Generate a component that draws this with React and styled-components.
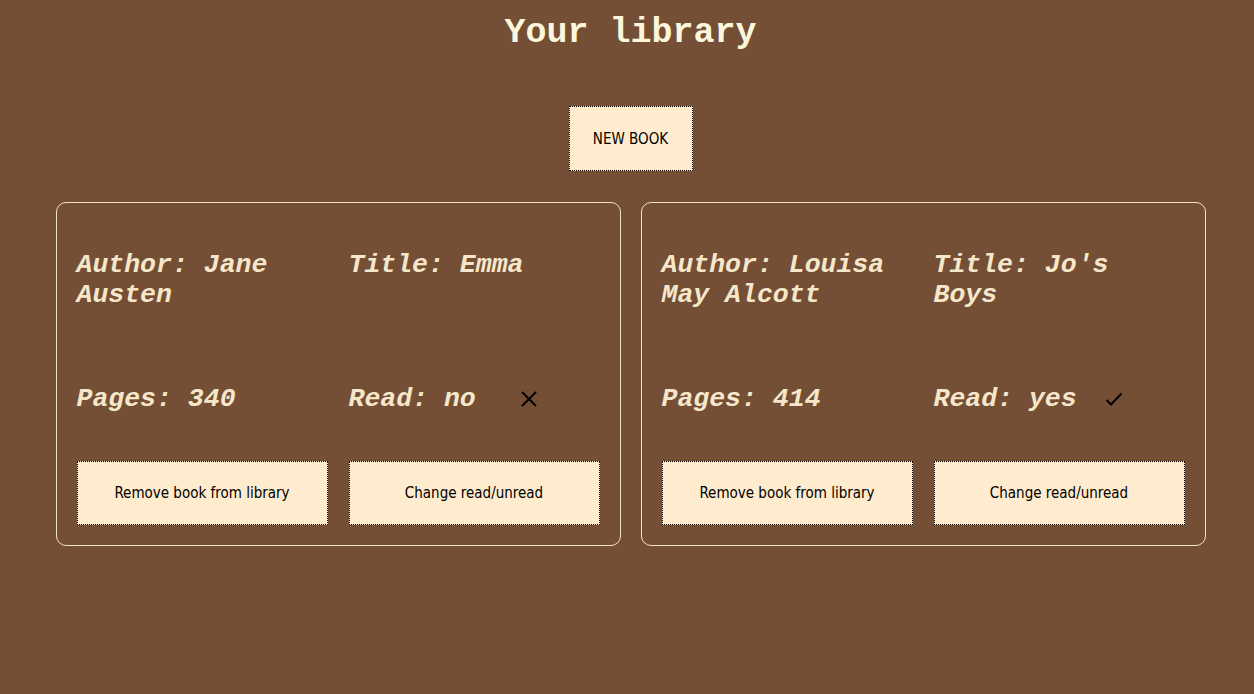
import React from "react";
import styled, { createGlobalStyle } from "styled-components";

const Global = createGlobalStyle`
  html, body { margin: 0; padding: 0; background: #744f35; }
  body { font-family: "Liberation Mono", "Courier New", monospace; }
`;

const Page = styled.div`
  min-height: 694px;
  padding-left: 7px;
  display: flex;
  flex-direction: column;
  align-items: center;
  background: #744f35;
`;

const Heading = styled.h1`
  margin: 13px 0 0;
  font-family: "Liberation Mono", "Courier New", monospace;
  font-weight: bold;
  font-size: 35px;
  line-height: 40px;
  color: #fbf6dc;
`;

const Button = styled.button`
  background: #ffebcd;
  border: 1px dotted #000;
  color: #000;
  font-family: "DejaVu Sans Condensed", "Liberation Sans", sans-serif;
  font-size: 15px;
  cursor: pointer;
  padding: 0;
  width: ${(p) => p.$w || "100%"};
  height: ${(p) => p.$h || "64px"};
`;

const NewBook = styled(Button)`
  margin-top: 53px;
`;

const Grid = styled.div`
  margin-top: 31px;
  display: grid;
  grid-template-columns: 565px 565px;
  gap: 20px;
`;

const Card = styled.div`
  box-sizing: border-box;
  border: 1px solid #f3e2c4;
  border-radius: 10px;
  padding: 20px;
  display: grid;
  grid-template-columns: 1fr 1fr;
  column-gap: 21px;
  row-gap: 20px;
  align-items: start;
`;

const Field = styled.p`
  margin: 27px 0;
  font-family: "Liberation Mono", "Courier New", monospace;
  font-style: italic;
  font-weight: bold;
  font-size: 26.5px;
  line-height: 30px;
  color: #f6e7cb;
  display: flex;
  align-items: center;
`;

const Label = styled.span`
  width: 171px;
  flex: none;
`;

const Icon = styled.svg`
  width: 18px;
  height: 18px;
  flex: none;
`;

const books = [
  { author: "Jane Austen", title: "Emma", pages: 340, read: false },
  { author: "Louisa May Alcott", title: "Jo's Boys", pages: 414, read: true },
];

function ReadIcon({ read }) {
  return read ? (
    <Icon viewBox="0 0 18 18" fill="none" stroke="#000" strokeWidth="2">
      <path d="M1.5 10 L6 14.5 L16.5 3.5" />
    </Icon>
  ) : (
    <Icon viewBox="0 0 18 18" fill="none" stroke="#000" strokeWidth="2">
      <path d="M2 2 L16 16 M16 2 L2 16" />
    </Icon>
  );
}

export default function App() {
  return (
    <>
      <Global />
      <Page>
        <Heading>Your library</Heading>
        <NewBook $w="124px" $h="65px">NEW BOOK</NewBook>
        <Grid>
          {books.map((b) => (
            <Card key={b.title}>
              <Field>Author: {b.author}</Field>
              <Field>Title: {b.title}</Field>
              <Field>Pages: {b.pages}</Field>
              <Field>
                <Label>Read: {b.read ? "yes" : "no"}</Label>
                <ReadIcon read={b.read} />
              </Field>
              <Button>Remove book from library</Button>
              <Button>Change read/unread</Button>
            </Card>
          ))}
        </Grid>
      </Page>
    </>
  );
}
